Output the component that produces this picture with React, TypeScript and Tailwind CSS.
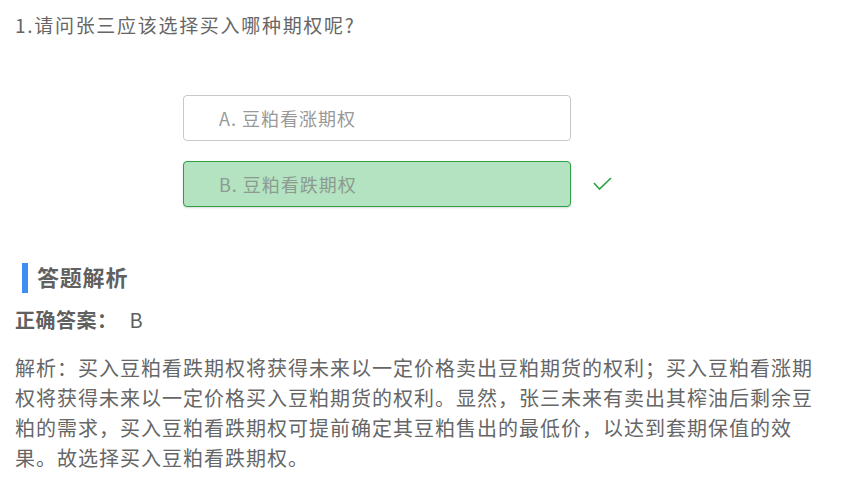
const options = [
  { label: "A. 豆粕看涨期权", correct: false },
  { label: "B. 豆粕看跌期权", correct: true },
];

export default function App() {
  return (
    <div className="w-[848px] h-[501px] overflow-hidden bg-white px-[15px] font-['Noto_Sans_CJK_SC',sans-serif] text-[#666]">
      <p className="pt-[12px] text-[19px] leading-[26px] tracking-[1.7px]">1.请问张三应该选择买入哪种期权呢?</p>

      <div className="mt-[57px] ml-[168px] flex flex-col gap-[20px]">
        {options.map((o) => (
          <div key={o.label} className="flex items-center">
            <div
              className={
                o.correct
                  ? "w-[388px] h-[46px] rounded-[4px] border border-[#2ea043] bg-[#b3e3c0] pl-[35px] flex items-center text-[18px] tracking-[1px] text-[#8c9a90] shadow-[0_1px_2px_rgba(0,0,0,0.15)]"
                  : "w-[388px] h-[46px] rounded-[4px] border border-[#c8c8c8] bg-white pl-[35px] flex items-center text-[18px] tracking-[1px] text-[#999]"
              }
            >
              {o.label}
            </div>
            {o.correct && (
              <svg width="22" height="16" viewBox="0 0 22 16" className="ml-[21px]" fill="none">
                <polyline points="2,7 7.5,13 19,2" stroke="#2ba245" strokeWidth="1.6" />
              </svg>
            )}
          </div>
        ))}
      </div>

      <div className="mt-[56px] flex items-center h-[30px]">
        <div className="ml-[7px] w-[6px] h-[30px] bg-[#3d8ef0]" />
        <span className="ml-[9px] -mt-[4px] text-[22px] font-bold tracking-[0.8px] text-[#606060]">答题解析</span>
      </div>

      <p className="mt-[12px] text-[20px] leading-[30px] text-[#606060]">
        <span className="font-bold tracking-[0.5px]">正确答案：</span>
        <span className="ml-[12px]">B</span>
      </p>

      <p className="mt-[18px] text-[20px] leading-[30px] tracking-[1px] text-[#666] w-[818px]">
        解析：买入豆粕看跌期权将获得未来以一定价格卖出豆粕期货的权利；买入豆粕看涨期权将获得未来以一定价格买入豆粕期货的权利。显然，张三未来有卖出其榨油后剩余豆粕的需求，买入豆粕看跌期权可提前确定其豆粕售出的最低价，以达到套期保值的效果。故选择买入豆粕看跌期权。
      </p>
    </div>
  );
}
